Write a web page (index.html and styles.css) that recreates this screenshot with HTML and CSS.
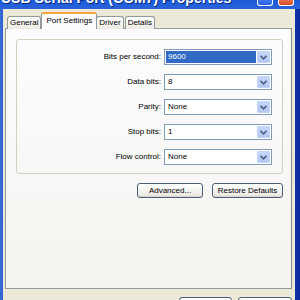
FILE: index.html
```html
<!DOCTYPE html>
<html lang="en">
<head>
    <meta charset="UTF-8">
    <title>USB Serial Port (COM7) Properties</title>
    <link rel="stylesheet" href="styles.css">
</head>
<body>
    <div class="window">
        <div class="titlebar">
            <span class="title">USB Serial Port (COM7) Properties</span>
            <div class="caption-buttons">
                <span class="caption help"></span>
                <span class="caption close"></span>
            </div>
        </div>
        <div class="client">
            <div class="tabs">
                <div class="tab">General</div>
                <div class="tab active">Port Settings</div>
                <div class="tab">Driver</div>
                <div class="tab">Details</div>
            </div>
            <div class="panel">
                <div class="group">
                    <label>Bits per second:</label>
                    <div class="combo">
                        <span class="value selected">9600</span>
                        <span class="arrow"><svg width="7" height="5" viewBox="0 0 7 5"><polyline points="0.5,0.8 3.5,3.8 6.5,0.8" fill="none" stroke="#4d6185" stroke-width="1.6"/></svg></span>
                    </div>
                    <label>Data bits:</label>
                    <div class="combo">
                        <span class="value">8</span>
                        <span class="arrow"><svg width="7" height="5" viewBox="0 0 7 5"><polyline points="0.5,0.8 3.5,3.8 6.5,0.8" fill="none" stroke="#4d6185" stroke-width="1.6"/></svg></span>
                    </div>
                    <label>Parity:</label>
                    <div class="combo">
                        <span class="value">None</span>
                        <span class="arrow"><svg width="7" height="5" viewBox="0 0 7 5"><polyline points="0.5,0.8 3.5,3.8 6.5,0.8" fill="none" stroke="#4d6185" stroke-width="1.6"/></svg></span>
                    </div>
                    <label>Stop bits:</label>
                    <div class="combo">
                        <span class="value">1</span>
                        <span class="arrow"><svg width="7" height="5" viewBox="0 0 7 5"><polyline points="0.5,0.8 3.5,3.8 6.5,0.8" fill="none" stroke="#4d6185" stroke-width="1.6"/></svg></span>
                    </div>
                    <label>Flow control:</label>
                    <div class="combo">
                        <span class="value">None</span>
                        <span class="arrow"><svg width="7" height="5" viewBox="0 0 7 5"><polyline points="0.5,0.8 3.5,3.8 6.5,0.8" fill="none" stroke="#4d6185" stroke-width="1.6"/></svg></span>
                    </div>
                </div>
                <div class="actions">
                    <button class="btn advanced">Advanced...</button>
                    <button class="btn restore">Restore Defaults</button>
                </div>
            </div>
            <div class="footer">
                <button class="btn ok">OK</button>
                <button class="btn cancel">Cancel</button>
            </div>
        </div>
    </div>
</body>
</html>
```

FILE: styles.css
```css
* {
    box-sizing: border-box;
    margin: 0;
    padding: 0;
}

body {
    width: 300px;
    height: 300px;
    overflow: hidden;
    font-family: 'Liberation Sans', Arial, sans-serif;
    font-size: 8px;
    color: #000000;
}

.window {
    display: flex;
    flex-direction: column;
    height: 300px;
    overflow: hidden;
    background: linear-gradient(90deg, #3a6fd9 0, #2d5fd0 3px, #1c44bb 95%, #0a2a9e 100%);
}

/* title bar, only the bottom of it is on screen */
.titlebar {
    display: flex;
    flex-shrink: 0;
    justify-content: space-between;
    height: 9px;
    overflow: hidden;
    background: linear-gradient(180deg, #1d5ad8, #2a64dc);
}

.title {
    margin-top: -9px;
    margin-left: 1px;
    font-size: 14px;
    font-weight: bold;
    line-height: 14px;
    color: #ffffff;
    white-space: nowrap;
    text-shadow: 1px 1px 0 #0a2a7a;
}

.caption-buttons {
    display: flex;
    gap: 5px;
    padding-right: 6px;
}

.caption {
    width: 16px;
    height: 6px;
    border: 1px solid #ffffff;
    border-top: none;
    border-radius: 0 0 3px 3px;
}

.caption.help {
    background: linear-gradient(180deg, #3d78f0, #2a5fe0);
}

.caption.close {
    background: linear-gradient(180deg, #e8704a, #d24a24);
}

.client {
    flex: 1;
    min-height: 0;
    overflow: hidden;
    margin: 0 5px 0 3px;
    padding: 3px 3px 0 2px;
    background: #ece9d8;
}

/* tabs */
.tabs {
    display: flex;
    align-items: flex-end;
    height: 17px;
    padding-left: 2px;
    margin-bottom: -1px;
}

.tab {
    height: 13px;
    padding: 0 2px;
    line-height: 12px;
    border: 1px solid #919b9c;
    border-bottom: none;
    border-radius: 3px 3px 0 0;
    background: linear-gradient(180deg, #ffffff, #eceae3);
    margin-right: 1px;
}

.tab.active {
    position: relative;
    z-index: 1;
    height: 17px;
    margin: 0 -1px 0 -1px;
    padding: 0 4px;
    line-height: 14px;
    border-top: 2px solid #f2a53a;
    background: #fcfcfe;
}

.panel {
    height: 261px;
    padding: 10px 8px 0 10px;
    border: 1px solid #919b9c;
    border-right-color: #7f8a8b;
    background: linear-gradient(180deg, #fcfcfe, #f4f3ee);
}

/* settings group */
.group {
    display: grid;
    grid-template-columns: 1fr 108px;
    grid-auto-rows: 16px;
    column-gap: 3px;
    row-gap: 9px;
    padding: 9px 10px 8px 0;
    border: 1px solid #d0d0bf;
    border-radius: 3px;
}

.group label {
    text-align: right;
    line-height: 16px;
}

.combo {
    display: flex;
    align-items: center;
    padding: 1px;
    border: 1px solid #7f9db9;
    background: #ffffff;
}

.value {
    flex: 1;
    height: 12px;
    padding-left: 2px;
    margin-right: 1px;
    line-height: 12px;
}

.value.selected {
    background: #316ac5;
    color: #ffffff;
}

.arrow {
    display: flex;
    align-items: center;
    justify-content: center;
    width: 13px;
    height: 12px;
    border: 1px solid #c5d4f5;
    border-radius: 1px;
    background: linear-gradient(180deg, #c6d6fb, #b4c8f4);
}

/* buttons */
.actions {
    display: flex;
    justify-content: flex-end;
    gap: 9px;
    margin-top: 9px;
}

.btn {
    height: 15px;
    font-family: 'Liberation Sans', Arial, sans-serif;
    font-size: 8px;
    color: #000000;
    border: 1px solid #4c5f7a;
    border-radius: 3px;
    background: linear-gradient(180deg, #ffffff, #ecebe6 85%, #d6d0c5);
}

.advanced {
    width: 66px;
}

.restore {
    width: 71px;
}

.footer {
    display: flex;
    justify-content: flex-end;
    gap: 6px;
    padding: 8px 0 0 0;
}

.ok {
    width: 53px;
}

.cancel {
    width: 54px;
}
```
